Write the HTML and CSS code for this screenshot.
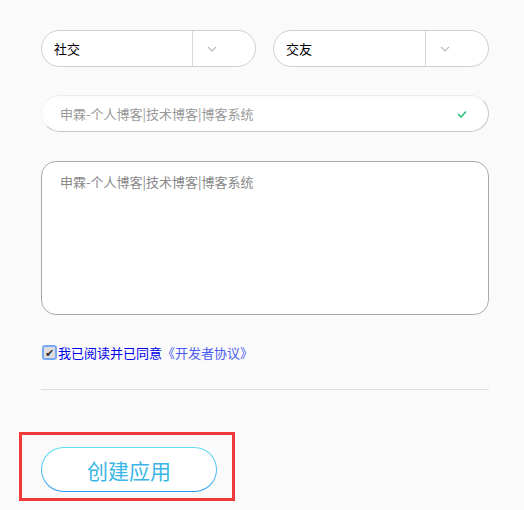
FILE: index.html
```html
<!DOCTYPE html>
<html>
<head>
  <title>创建应用</title>
  <link rel="stylesheet" href="styles.css">
</head>
<body>
  <div class="form">
    <div class="select-row">
      <div class="select">
        <span class="select-value">社交</span>
        <span class="select-arrow">
          <svg width="10" height="6" viewBox="0 0 10 6"><path d="M1 1 L5 5 L9 1" fill="none" stroke="#bbb" stroke-width="1.2"/></svg>
        </span>
      </div>
      <div class="select">
        <span class="select-value">交友</span>
        <span class="select-arrow">
          <svg width="10" height="6" viewBox="0 0 10 6"><path d="M1 1 L5 5 L9 1" fill="none" stroke="#bbb" stroke-width="1.2"/></svg>
        </span>
      </div>
    </div>

    <div class="input">
      <span class="input-text">申霖-个人博客|技术博客|博客系统</span>
      <svg class="input-ok" width="10" height="8" viewBox="0 0 10 8"><path d="M1 4 L4 7 L9 1.5" fill="none" stroke="#2fc07a" stroke-width="1.6"/></svg>
    </div>

    <textarea class="textarea" placeholder="申霖-个人博客|技术博客|博客系统"></textarea>

    <label class="agree">
      <span class="check">&#10004;</span>
      <span class="agree-text">我已阅读并已同意</span><a class="agree-link" href="#">《开发者协议》</a>
    </label>

    <div class="divider"></div>

    <div class="submit-box">
      <button class="submit">创建应用</button>
    </div>
  </div>
</body>
</html>
```

FILE: styles.css
```css
body {
  margin: 0;
  background-color: #fafafa;
  font-family: "Noto Sans CJK SC", "Noto Sans", sans-serif;
  font-size: 13px;
  color: #000;
}

.form {
  width: 448px;
  padding: 30px 0 0 41px;
}

.select-row {
  display: grid;
  grid-template-columns: 215px 216px;
  gap: 17px;
}

.select {
  display: flex;
  height: 37px;
  box-sizing: border-box;
  border: 1px solid #cfcfcf;
  border-radius: 19px;
  background-color: #fff;
}

.select-value {
  flex: 1;
  display: flex;
  align-items: center;
  padding-left: 12px;
  font-size: 13px;
  border-right: 1px solid #d8d8d8;
}

.select-arrow {
  width: 38px;
  display: flex;
  align-items: center;
  justify-content: center;
  padding-right: 24px;
}

.input {
  display: flex;
  align-items: center;
  margin-top: 28px;
  height: 37px;
  box-sizing: border-box;
  border: 1px solid #c8c8c8;
  border-left-color: #f4f4f4;
  border-top-color: #ececec;
  border-radius: 19px;
  background-color: #fff;
  padding: 0 21px 0 18px;
  box-shadow: inset 0 0 4px rgba(0, 0, 0, 0.03);
}

.input-text {
  flex: 1;
  color: #999;
  font-size: 13px;
}

.textarea {
  display: block;
  margin-top: 29px;
  width: 448px;
  height: 154px;
  box-sizing: border-box;
  border: 1px solid #aaa;
  border-radius: 15px;
  background-color: #fff;
  padding: 10px 18px;
  font-family: "Noto Sans CJK SC", sans-serif;
  font-size: 13px;
  resize: none;
  outline: none;
}

.textarea::placeholder {
  color: #888;
}

.agree {
  display: flex;
  align-items: center;
  margin-top: 28px;
  font-size: 13px;
  height: 18px;
}

.check {
  width: 11px;
  height: 11px;
  border: 2px solid #7aa9f3;
  border-radius: 3px;
  background-color: #ddd;
  color: #333;
  font-size: 11px;
  line-height: 11px;
  text-align: center;
  margin: 0 1px 0 1px;
}

.agree-text {
  color: #0000ee;
}

.agree-link {
  color: #4a5cf0;
  text-decoration: none;
}

.divider {
  margin-top: 28px;
  border-top: 1px solid #ddd;
}

.submit-box {
  margin: 42px 0 0 -22px;
  width: 191px;
  height: 51px;
  border: 3px solid #f33a3a;
  padding: 12px 0 0 19px;
  box-sizing: content-box;
}

.submit {
  width: 176px;
  height: 45px;
  border: 1px solid transparent;
  border-radius: 23px;
  background: linear-gradient(#fff, #fff) padding-box, linear-gradient(#64e0f2, #2a9ef2) border-box;
  color: #3ab6e6;
  font-family: "Noto Sans CJK SC", sans-serif;
  font-size: 21px;
  cursor: pointer;
}
```
